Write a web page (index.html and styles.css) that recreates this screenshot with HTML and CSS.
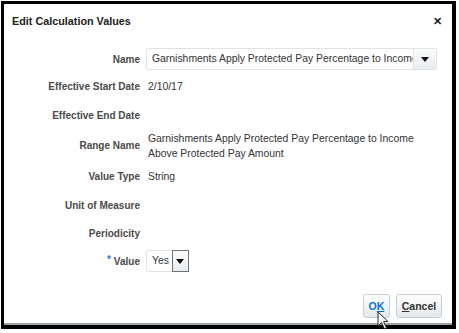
FILE: index.html
```html
<!DOCTYPE html>
<html lang="en">
<head>
  <meta charset="UTF-8">
  <title>Edit Calculation Values</title>
  <link rel="stylesheet" href="styles.css">
</head>
<body>
  <div class="dialog">
    <div class="dialog-header">
      <h1>Edit Calculation Values</h1>
      <span class="close">&#x2715;</span>
    </div>
    <div class="form">
      <div class="label">Name</div>
      <div class="field">
        <div class="select wide">
          <span class="select-text">Garnishments Apply Protected Pay Percentage to Income</span>
          <span class="select-btn"><span class="arrow"></span></span>
        </div>
      </div>

      <div class="label">Effective Start Date</div>
      <div class="field text">2/10/17</div>

      <div class="label">Effective End Date</div>
      <div class="field text"></div>

      <div class="label">Range Name</div>
      <div class="field text multi">Garnishments Apply Protected Pay Percentage to Income<br>Above Protected Pay Amount</div>

      <div class="label">Value Type</div>
      <div class="field text">String</div>

      <div class="label">Unit of Measure</div>
      <div class="field text"></div>

      <div class="label">Periodicity</div>
      <div class="field text"></div>

      <div class="label"><span class="req">*</span> Value</div>
      <div class="field">
        <div class="select small">
          <span class="select-text">Yes</span>
          <span class="select-btn dark"><span class="arrow"></span></span>
        </div>
      </div>
    </div>
    <div class="dialog-footer">
      <button class="btn ok">O<u>K</u></button>
      <button class="btn cancel"><u>C</u>ancel</button>
      <svg class="cursor" width="14" height="20" viewBox="0 0 14 20">
        <path d="M1 1 L1 15 L4.5 11.5 L7.5 18 L9.5 17 L6.5 10.5 L11 10.5 Z" fill="#fff" stroke="#222" stroke-width="1" stroke-linejoin="round"/>
      </svg>
    </div>
  </div>
</body>
</html>
```

FILE: styles.css
```css
body {
  margin: 0;
  background: #FFFFFF;
  font-family: 'Liberation Sans', Arial, sans-serif;
  font-size: 10px;
  color: #333333;
}
.dialog {
  margin: 1px 0 0 1px;
  width: 448px;
  height: 321px;
  border: 3px solid #000000;
  border-right-width: 4px;
  border-bottom-width: 4px;
  box-shadow: inset 0 -2px 0 #9DA3A8;
  background: #FFFFFF;
  display: flex;
  flex-direction: column;
}
.dialog-header {
  height: 42px;
  display: flex;
  align-items: center;
  justify-content: space-between;
  padding: 0 10px 0 8px;
}
.dialog-header h1 {
  margin: -8px 0 0 0;
  font-size: 10.8px;
  font-weight: 700;
  color: #222222;
}
.close {
  font-size: 11px;
  font-weight: 700;
  color: #222222;
  margin-top: -8px;
}
.form {
  display: grid;
  grid-template-columns: 136px 1fr;
  grid-template-rows: 26px 28px 30px 31px 30px 28px 29px 26px;
  column-gap: 6px;
  padding-right: 15px;
}
.label {
  display: flex;
  align-items: center;
  justify-content: flex-end;
  font-weight: 700;
  color: #4A4A4A;
}
.req {
  color: #2C7BC4;
  margin-right: 3px;
  align-self: flex-start;
  margin-top: 6px;
}
.field {
  display: flex;
  align-items: center;
  font-size: 10.4px;
  color: #333333;
}
.field.text {
  padding-left: 2px;
}
.field.multi {
  line-height: 15px;
  display: block;
  padding-top: 1px;
}
.select {
  display: flex;
  height: 22px;
  box-sizing: border-box;
  border: 1px solid #DFE4E8;
  border-radius: 2px;
  background: #FFFFFF;
}
.select.wide {
  width: 291px;
}
.select-text {
  flex: 1;
  padding: 0 5px;
  line-height: 20px;
  white-space: nowrap;
  overflow: hidden;
}
.select-btn {
  width: 22px;
  display: flex;
  align-items: center;
  justify-content: center;
  border-left: 1px solid #DFE4E8;
  background: linear-gradient(#FBFCFC, #E9EDF0);
}
.select.small .select-text {
  padding: 0 4px 0 5px;
}
.select.small .select-btn.dark {
  width: 15px;
  border: 1px solid #6F7377;
  margin: -1px;
}
.arrow {
  width: 0;
  height: 0;
  border-left: 4px solid transparent;
  border-right: 4px solid transparent;
  border-top: 5px solid #111111;
}
.dialog-footer {
  margin-top: auto;
  display: flex;
  justify-content: flex-end;
  gap: 6px;
  padding: 0 10px 7px 0;
  position: relative;
}
.btn {
  height: 24px;
  box-sizing: border-box;
  border: 1px solid #C4CED7;
  border-radius: 3px;
  background: linear-gradient(#FFFFFF, #E4E8EA);
  font-family: 'Liberation Sans', Arial, sans-serif;
  font-size: 10.5px;
  font-weight: 700;
  padding: 0 5px;
  cursor: pointer;
}
.btn.ok {
  color: #0572CE;
  width: 27px;
  padding: 0;
}
.btn.cancel {
  color: #333333;
  width: 46px;
  padding: 0;
}
.cursor {
  position: absolute;
  right: 61px;
  top: 17px;
}
```
